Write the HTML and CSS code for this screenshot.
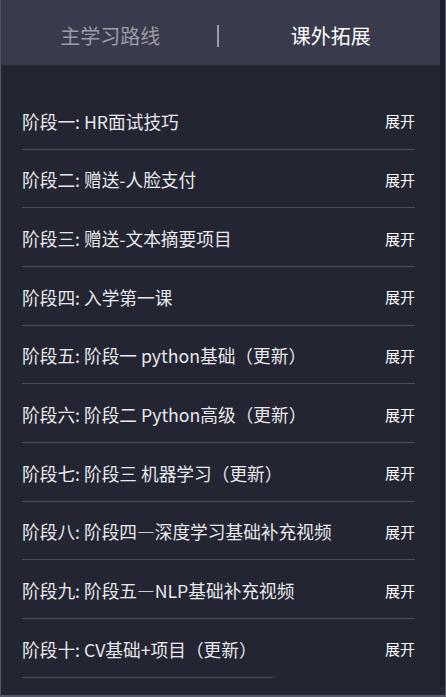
FILE: index.html
```html
<!DOCTYPE html>
<html lang="zh-CN">
<head>
  <meta charset="UTF-8" />
  <meta name="viewport" content="width=device-width, initial-scale=1.0"/>
  <title>课外拓展</title>
  <link rel="stylesheet" href="styles.css">
</head>
<body>
  <div class="panel">
    <div class="panel-main">
      <div class="tabs">
        <div class="tab">主学习路线</div>
        <span class="tab-divider"></span>
        <div class="tab active">课外拓展</div>
      </div>
      <ul class="stage-list">
        <li class="stage"><span class="stage-title">阶段一: HR面试技巧</span><span class="toggle">展开</span></li>
        <li class="stage"><span class="stage-title">阶段二: 赠送-人脸支付</span><span class="toggle">展开</span></li>
        <li class="stage"><span class="stage-title">阶段三: 赠送-文本摘要项目</span><span class="toggle">展开</span></li>
        <li class="stage"><span class="stage-title">阶段四: 入学第一课</span><span class="toggle">展开</span></li>
        <li class="stage"><span class="stage-title">阶段五: 阶段一 python基础（更新）</span><span class="toggle">展开</span></li>
        <li class="stage"><span class="stage-title">阶段六: 阶段二 Python高级（更新）</span><span class="toggle">展开</span></li>
        <li class="stage"><span class="stage-title">阶段七: 阶段三 机器学习（更新）</span><span class="toggle">展开</span></li>
        <li class="stage"><span class="stage-title">阶段八: 阶段四—深度学习基础补充视频</span><span class="toggle">展开</span></li>
        <li class="stage"><span class="stage-title">阶段九: 阶段五—NLP基础补充视频</span><span class="toggle">展开</span></li>
        <li class="stage"><span class="stage-title">阶段十: CV基础+项目（更新）</span><span class="toggle">展开</span></li>
      </ul>
    </div>
    <div class="scroll-track"></div>
  </div>
</body>
</html>
```

FILE: styles.css
```css
:root {
  --header-bg: #393b4c;
  --body-bg: #232533;
  --frame: #555768;
  --track: #1c1e29;
  --line: #4b4d5b;
  --text: #e8e8ec;
  --muted: #9b9ca6;
}

* {
  box-sizing: border-box;
  margin: 0;
  padding: 0;
}

body {
  font-family: "Noto Sans CJK SC", "Noto Sans", sans-serif;
  background-color: var(--body-bg);
  width: 446px;
  height: 697px;
  overflow: hidden;
}

.panel {
  display: flex;
  height: 697px;
  border-left: 1px solid var(--frame);
  border-right: 1px solid var(--frame);
  border-bottom: 2px solid var(--frame);
  background-color: var(--body-bg);
}

.panel-main {
  flex: 1;
  display: flex;
  flex-direction: column;
}

.scroll-track {
  width: 5px;
  height: 686px;
  background-color: var(--track);
}

.tabs {
  display: flex;
  align-items: center;
  height: 65px;
  padding-top: 6px;
  background-color: var(--header-bg);
}

.tab {
  flex: 1;
  text-align: center;
  font-size: 20px;
  color: var(--muted);
  line-height: 1;
}

.tab.active {
  color: #ffffff;
}

.tab-divider {
  width: 2px;
  height: 22px;
  margin-left: -3px;
  margin-right: 3px;
  background-color: #9a9aa5;
}

.stage-list {
  list-style: none;
  padding: 26px 25px 0 21px;
}

.stage {
  display: flex;
  justify-content: space-between;
  align-items: center;
  height: 58.67px;
  padding-top: 2px;
  border-bottom: 1px solid var(--line);
}

.stage:last-child {
  border-style: solid;
  border-width: 0 0 1px 0;
  border-image: linear-gradient(to right, var(--line) 63%, transparent 65%) 1;
}

.stage-title {
  font-size: 17.7px;
  color: var(--text);
  white-space: nowrap;
}

.toggle {
  font-size: 15px;
  color: #ffffff;
}
```
